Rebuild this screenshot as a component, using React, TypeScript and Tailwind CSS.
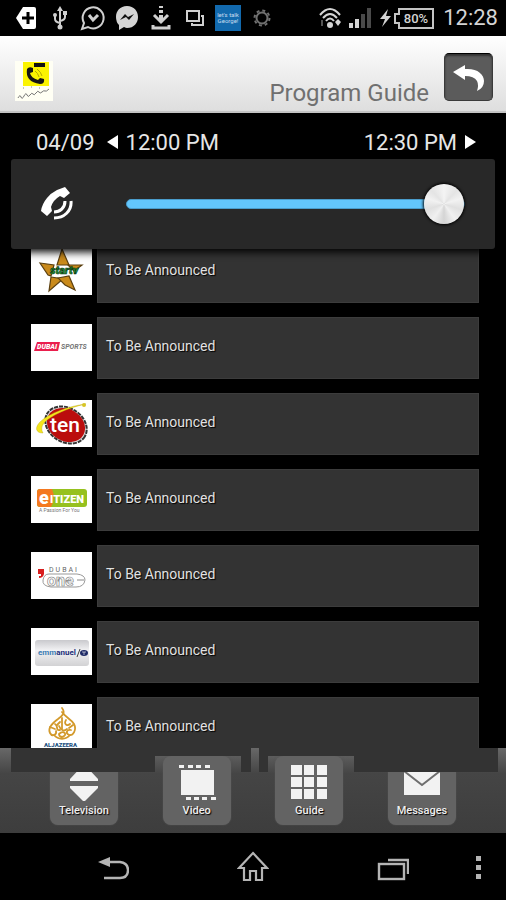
import { useState, type ReactNode } from 'react'

// ── Types ────────────────────────────────────────────────────────────────────

interface Channel {
  id: string
  name: string
  program: string
  logo: ReactNode
}

interface Tab {
  label: string
  icon: ReactNode
}

// ── Channel logos ────────────────────────────────────────────────────────────

const FONT = 'Roboto, sans-serif'

const starLogo = (
  <>
    <g fill="#c98a1b" stroke="#5c4010" strokeWidth="1.2">
      <path d="M31 1 L38 17 L26 17 Z" />
      <path d="M9 15 L23 17 L20 28 L17 27 Z" />
      <path d="M37 17 L51 17 L43 23 Z" />
      <path d="M20 29 L32 31 L18 43 Z" />
      <path d="M27 30 L38 28 L44 42 L34 37 Z" />
    </g>
    <text x="19" y="26" fontSize="11" fontStyle="italic" fontWeight="900" fill="#1f9a35" stroke="#0b3312" strokeWidth="0.6" fontFamily={FONT}>startv</text>
  </>
)

const dubaiSportsLogo = (
  <>
    <path d="M6 18 H29 L27 27 H3 Z" fill="#ea1f4d" />
    <text x="6" y="25" fontSize="7" fontStyle="italic" fontWeight="900" fill="#fff" fontFamily={FONT}>DUBAI</text>
    <text x="30" y="25" fontSize="7" fontStyle="italic" fontWeight="700" fill="#777" fontFamily={FONT}>SPORTS</text>
  </>
)

const tenLogo = (
  <>
    <ellipse cx="35" cy="25" rx="22" ry="17" transform="rotate(32 35 25)" fill="#ddd" stroke="#333" strokeWidth="2" strokeDasharray="4 1" />
    <ellipse cx="35" cy="25" rx="20" ry="16" transform="rotate(30 35 25)" fill="#bb0d0d" />
    <path d="M55 4 C36 8 19 16 13 23 Q9 28 12 33 C4 33 4 27 9 22 C18 13 38 6 55 4 Z" fill="#f4e51c" stroke="#b9a512" strokeWidth="0.4" />
    <circle cx="53" cy="5" r="2" fill="#d7c526" />
    <text x="19" y="32" fontSize="21" fontWeight="500" fill="#fff" fontFamily={FONT}>ten</text>
  </>
)

const citizenLogo = (
  <>
    <rect x="6" y="13" width="50" height="18" rx="3" fill="#96c11f" />
    <path d="M9 13 H21 Q25 22 20 31 H9 Q6 31 6 28 V16 Q6 13 9 13 Z" fill="#f47920" />
    <text x="8" y="28" fontSize="18" fontWeight="900" fill="#fff" fontFamily={FONT}>e</text>
    <text x="19" y="27" fontSize="11" fontWeight="900" fill="#fff" fontFamily={FONT}>ITIZEN</text>
    <text x="8" y="36" fontSize="5" fill="#777" fontFamily={FONT}>A Passion For You</text>
  </>
)

const dubaiOneLogo = (
  <>
    <path d="M7 17 H13 V22 Q12 26 8 26 V24 H10 V22 H7 Z" fill="#d81e1e" />
    <text x="18" y="20" fontSize="7" letterSpacing="2" fill="#666" fontFamily={FONT}>DUBAI</text>
    <path d="M18 22 H46 Q54 23 54 28 Q53 35 45 35 H20 Q11 34 12 28 Q13 22 18 22 Z" fill="none" stroke="#999" />
    <text x="16" y="34" fontSize="16" fontWeight="700" fill="#fff" stroke="#888" strokeWidth="0.7" fontFamily={FONT}>one</text>
    <path d="M46 28 H53" stroke="#888" />
  </>
)

const emmanuelLogo = (
  <>
    <defs>
      <linearGradient id="emm" x1="0" y1="0" x2="0" y2="1">
        <stop offset="0" stopColor="#c9c9cd" />
        <stop offset="0.4" stopColor="#f2f2f4" />
        <stop offset="1" stopColor="#d2d2d4" />
      </linearGradient>
    </defs>
    <rect x="4" y="12" width="54" height="26" rx="3" fill="url(#emm)" />
    <text x="7" y="27" fontSize="8" fontWeight="700" fill="#3f7fb5" fontFamily={FONT}>
      emm<tspan fill="#23307a">anuel</tspan>
    </text>
    <path d="M46 29 L49 21" stroke="#444" />
    <ellipse cx="53" cy="25" rx="4" ry="3" fill="#1e2a66" />
    <path d="M51 24 H55 M53 24 V27" stroke="#fff" strokeWidth="0.6" />
  </>
)

const jazeeraLogo = (
  <>
    <g fill="none" stroke="#d39a2c" strokeWidth="1.8" strokeLinecap="round">
      <path d="M31 4 C35 9 31 12 27 15 C20 20 17 25 19 29 C21 33 26 31 25 27" />
      <path d="M31 8 C34 13 40 15 43 20 C46 26 42 32 38 31 C34 29 36 25 40 26" />
      <path d="M24 20 C28 22 24 27 29 26 M31 14 V25 M35 16 C32 21 37 22 39 20" />
      <path d="M23 31 C27 36 35 36 39 31 M28 30 C31 27 35 28 34 31 C32 34 28 33 28 30" />
      <path d="M19 23 L24 25 M29 18 L26 21 M42 21 L38 24" />
      <path d="M28 22 Q31 29 36 25" />
    </g>
    <text x="13" y="43" fontSize="6" fontWeight="900" fill="#24527f" fontFamily={FONT}>ALJAZEERA</text>
  </>
)

const channels: Channel[] = [
  { id: 'star', name: 'Star TV', program: 'To Be Announced', logo: starLogo },
  { id: 'dubai-sports', name: 'Dubai Sports', program: 'To Be Announced', logo: dubaiSportsLogo },
  { id: 'ten', name: 'Ten', program: 'To Be Announced', logo: tenLogo },
  { id: 'citizen', name: 'Citizen', program: 'To Be Announced', logo: citizenLogo },
  { id: 'dubai-one', name: 'Dubai One', program: 'To Be Announced', logo: dubaiOneLogo },
  { id: 'emmanuel', name: 'Emmanuel TV', program: 'To Be Announced', logo: emmanuelLogo },
  { id: 'jazeera', name: 'Al Jazeera', program: 'To Be Announced', logo: jazeeraLogo },
]

// ── Tabs ─────────────────────────────────────────────────────────────────────

const tabs: Tab[] = [
  {
    label: 'Television',
    icon: (
      <>
        <path d="M20 0 L34 15 V17 H6 V15 Z" />
        <path d="M6 22 H34 V24 L21 37 H19 L6 24 Z" />
      </>
    ),
  },
  {
    label: 'Video',
    icon: (
      <>
        <rect x="4" y="6" width="33" height="25" />
        <path d="M2 1h5v3h-5z M11 1h5v3h-5z M19 1h5v3h-5z M28 1h5v3h-5z" />
        <path d="M9 33h5v3h-5z M17 33h5v3h-5z M25 33h5v3h-5z M34 33h5v3h-5z" />
      </>
    ),
  },
  {
    label: 'Guide',
    icon: (
      <path d="M2 1h11v10h-11z M15 1h10v10h-10z M28 1h10v10h-10z M2 13h11v10h-11z M15 13h10v10h-10z M28 13h10v10h-10z M2 25h11v10h-11z M15 25h10v10h-10z M28 25h10v10h-10z" />
    ),
  },
  {
    label: 'Messages',
    icon: (
      <>
        <rect x="2" y="6" width="36" height="25" />
        <path d="M2 7 L20 21 L38 7" fill="none" stroke="#6e6e6e" strokeWidth="2" />
      </>
    ),
  },
]

// ── Component ────────────────────────────────────────────────────────────────

export default function App() {
  const [volume, setVolume] = useState(100)

  return (
    <div className="flex h-screen flex-col overflow-hidden bg-black font-['Roboto',sans-serif]">
      <StatusBar />

      <header className="flex h-[77px] shrink-0 items-end border-b-2 border-[#c4c4c4] bg-linear-to-b from-white to-[#dedede] pr-[13px] pb-[10px] pl-[15px]">
        <AppLogo />
        <h1 className="mr-[15px] ml-auto text-[24px] leading-[16px] text-[#707070]">Program Guide</h1>
        <button
          type="button"
          aria-label="Back"
          className="flex h-12 w-[49px] items-center justify-center rounded-[5px] border border-[#3a3a3a] border-t-black bg-[#5b5b5b] shadow-[inset_0_2px_2px_#333]"
        >
          <svg width="33" height="28" viewBox="0 0 33 28" fill="#fff">
            <path d="M1 9 L13 2 V6 C25 5 32 11 32 18 Q32 25 25 28 Q27 22 25 18 Q22 13 13 13 V17 Z" />
          </svg>
        </button>
      </header>

      <main className="relative min-h-0 flex-1 overflow-hidden">
        <div className="flex h-[58px] items-center pr-[30px] pl-9 text-[22px] text-[#e6e6e6]">
          <span>04/09</span>
          <button type="button" className="ml-3 flex items-center gap-2">
            <svg width="11" height="14" viewBox="0 0 11 14" fill="#fff"><path d="M11 0 V14 L0 7 Z" /></svg>
            12:00 PM
          </button>
          <button type="button" className="ml-auto flex items-center gap-2">
            12:30 PM
            <svg width="11" height="14" viewBox="0 0 11 14" fill="#fff"><path d="M0 0 V14 L11 7 Z" /></svg>
          </button>
        </div>

        <ul className="flex flex-col gap-[14px] pt-[70px] pr-[27px] pl-[31px]">
          {channels.map(c => (
            <li key={c.id} className="flex h-[62px] shrink-0 items-start gap-[5px]">
              <svg role="img" aria-label={c.name} viewBox="0 0 61 47" className="mt-[7px] h-[47px] w-[61px] shrink-0 bg-white">
                {c.logo}
              </svg>
              <div className="h-full flex-1 border border-[#3c3c3c] bg-[#333] px-2 pt-[18px] text-[14px] leading-5 text-[#e2e2e2] [text-shadow:1px_1px_1px_#000]">
                {c.program}
              </div>
            </li>
          ))}
        </ul>

        {/* Call volume, floats over the guide */}
        <div className="absolute inset-x-[11px] top-[46px] flex h-[90px] items-center rounded-[3px] bg-[#282828] pr-[30px] pl-[29px] shadow-[0_3px_8px_#000]">
          <svg width="33" height="34" viewBox="0 0 33 34" fill="none" stroke="#fff" className="shrink-0">
            <path d="M17 3 L25 0 L30 6 L24 11 L20 9 Q13 13 11 20 L12 24 L7 29 L1 24 Q2 17 7 11 Q11 6 17 3 Z" fill="#fff" stroke="none" />
            <path d="M31 14 C32 24 24 31 14 31" strokeWidth="3" />
            <path d="M25 14 C25 21 20 25 14 25" strokeWidth="3" />
          </svg>
          <input
            type="range"
            aria-label="Call volume"
            value={volume}
            onChange={e => setVolume(Number(e.target.value))}
            className="ml-[53px] h-10 min-w-0 flex-1 appearance-none bg-transparent [&::-webkit-slider-runnable-track]:h-[10px] [&::-webkit-slider-runnable-track]:rounded-full [&::-webkit-slider-runnable-track]:border [&::-webkit-slider-runnable-track]:border-[#4a9ccb] [&::-webkit-slider-runnable-track]:bg-[#63c6fc] [&::-webkit-slider-thumb]:-mt-4 [&::-webkit-slider-thumb]:size-10 [&::-webkit-slider-thumb]:appearance-none [&::-webkit-slider-thumb]:rounded-full [&::-webkit-slider-thumb]:bg-[conic-gradient(#f4f4f4,#e4e4e4_12%,#f2f2f2_20%,#e0e0e0_30%,#f0f0f0_40%,#d4d4d4_50%,#f0f0f0_60%,#e0e0e0_70%,#f2f2f2_80%,#e4e4e4_88%,#f4f4f4)] [&::-webkit-slider-thumb]:shadow-[0_0_3px_1px_#000]"
          />
        </div>
      </main>

      <nav className="relative flex h-[85px] shrink-0 justify-between bg-linear-to-b from-[#686868] via-[#454545] via-30% to-[#3d3d3d] px-[50px] pt-2 pb-2">
        {tabs.map(t => (
          <button
            key={t.label}
            type="button"
            className="flex w-[68px] flex-col items-center rounded-lg bg-[#636363] pt-2 text-[11px] leading-4 font-medium text-[#eee] shadow-[0_0_2px_#555] [text-shadow:1px_1px_1px_#000]"
          >
            <svg width="40" height="37" viewBox="0 0 40 37" fill="#f2f2f2" className="mb-[2px] shrink-0">{t.icon}</svg>
            {t.label}
          </button>
        ))}

        {/* Lower edge of the guide grid, overlapping the tabs */}
        <div className="pointer-events-none absolute top-0 right-2 left-[11px] flex items-start">
          <div className="h-6 flex-1 bg-[#333]" />
          <div className="h-2 w-[86px] bg-[#333]" />
          <div className="mr-2 h-6 w-[10px] bg-[#333]" />
          <div className="h-6 w-[9px] bg-[#333]" />
          <div className="h-2 w-[86px] bg-[#333]" />
          <div className="h-6 flex-1 bg-[#333]" />
        </div>
      </nav>

      <SystemBar />
    </div>
  )
}

// ── Small sub-components ─────────────────────────────────────────────────────

function StatusIcon({ children }: { children: ReactNode }) {
  return (
    <svg width="26" height="26" viewBox="0 0 26 26" fill="none" stroke="#d0d0d0" strokeWidth="2" className="shrink-0">
      {children}
    </svg>
  )
}

function StatusBar() {
  return (
    <div className="flex h-9 shrink-0 items-center bg-black pr-2 pl-[13px] text-[#d4d4d4]">
      <div className="flex w-[262px] shrink-0 items-center justify-between">
        <StatusIcon>
          <path d="M10 2 H21 Q23 2 23 4 V22 Q23 24 21 24 H10 L3 13 Z" fill="#fff" stroke="none" />
          <path d="M15 7 V19 M9 13 H21" stroke="#000" strokeWidth="3" />
        </StatusIcon>
        <StatusIcon>
          <path d="M13 4 V22 M8 11 V14 Q8 17 13 18 M18 9 V12 Q18 15 13 16" />
          <path d="M13 1 L16 6 H10 Z" fill="#d0d0d0" stroke="none" />
          <circle cx="13" cy="22" r="2.5" fill="#d0d0d0" stroke="none" />
          <rect x="16" y="6" width="4" height="4" fill="#d0d0d0" stroke="none" />
          <circle cx="8" cy="10" r="2" fill="#d0d0d0" stroke="none" />
        </StatusIcon>
        <StatusIcon>
          <path d="M2 24 L4 18 A10.5 10.5 0 1 1 8 22 Z" />
          <path d="M9 10 L13 15 L18 10" strokeWidth="3" />
        </StatusIcon>
        <StatusIcon>
          <path d="M13 1 C6 1 2 6 2 12 Q2 17 5 20 V25 L10 22 Q12 23 13 23 C20 23 24 18 24 12 C24 6 20 1 13 1 Z" fill="#d4d4d4" stroke="none" />
          <path d="M6 15 L11 9 L14 12 L20 9 L15 15 L12 12 Z" fill="#111" stroke="none" />
        </StatusIcon>
        <StatusIcon>
          <path d="M13 1 V3 M13 5 V8 M13 10 V17" strokeWidth="4" />
          <path d="M6 10 L13 17 L20 10" strokeWidth="3" />
          <path d="M5 20 V23 H21 V20" strokeWidth="3" />
        </StatusIcon>
        <StatusIcon>
          <rect x="5" y="6" width="12" height="10" />
          <path d="M19 11 H21 V20 H10 V18" />
        </StatusIcon>
        <StatusIcon>
          <rect width="26" height="26" fill="#1269ad" stroke="none" />
          <g fill="#c5dcef" stroke="none" fontFamily={FONT} fontSize="6" textAnchor="middle">
            <text x="13" y="12">let's talk</text>
            <text x="13" y="18">George!</text>
          </g>
        </StatusIcon>
        <StatusIcon>
          <circle cx="13" cy="13" r="5.5" stroke="#707070" />
          <circle cx="13" cy="13" r="7.5" stroke="#707070" strokeDasharray="3 2.9" />
        </StatusIcon>
      </div>

      <div className="ml-auto flex shrink-0 items-center">
        <svg width="22" height="22" viewBox="0 0 22 22" fill="none" stroke="#d4d4d4" strokeWidth="2">
          <path d="M1 8 Q11 -4 21 8 M4 11 Q11 3 18 11 M7 14 Q11 9 15 14" />
          <circle cx="11" cy="18" r="3" fill="#d4d4d4" stroke="none" />
          <path d="M3 13 V19" stroke="#555" />
          <path d="M16 15 L19 12 L22 15 L19 19 Z" fill="#d4d4d4" stroke="none" />
        </svg>
        <svg width="22" height="20" viewBox="0 0 22 20" className="ml-2">
          <path d="M0 15h4v5h-4z M6 11h4v9h-4z" fill="#d4d4d4" />
          <path d="M12 6h4v14h-4z M18 0h4v20h-4z" fill="#4a4a4a" />
        </svg>
        <svg width="11" height="18" viewBox="0 0 11 18" fill="#d4d4d4" className="ml-[9px]">
          <path d="M8 0 L0 10 H5 L2 18 L11 7 H6 Z" />
        </svg>
        <svg width="40" height="21" viewBox="0 0 40 21" fill="none" stroke="#c4c4c4" strokeWidth="2" className="ml-[3px]">
          <path d="M5 1 H39 V20 H5 V15 H1 V6 H5 Z" />
          <text x="22" y="15" fontSize="13" fontWeight="500" textAnchor="middle" fill="#d4d4d4" stroke="none" fontFamily={FONT}>80%</text>
        </svg>
        <time className="ml-[9px] text-[22px] leading-9">12:28</time>
      </div>
    </div>
  )
}

function AppLogo() {
  return (
    <svg width="38" height="40" viewBox="0 0 38 40" aria-label="Phone app" role="img">
      <rect width="38" height="40" fill="#fffff4" />
      <rect x="8" y="1" width="26" height="24" fill="#fbf400" />
      <path d="M19 2 H30 V6 H19 Z" fill="#111" />
      <path d="M12 8 Q14 5 18 7 L18 11 L15 12 Q16 17 23 19 L25 17 L29 18 Q30 23 25 23 Q10 21 12 8 Z" fill="#151515" />
      <path d="M20 10 Q23 12 24 16 M22 8 Q26 11 27 15" fill="none" stroke="#b3a900" />
      <path d="M3 37 Q5 33 6 36 T9 35 T12 34 T15 34 T18 33 T21 32 T24 31 T27 31 T30 30 T34 28" fill="none" stroke="#777" />
      <path d="M8 27h1 M16 26h1 M24 27h1" stroke="#888" />
    </svg>
  )
}

function SystemBar() {
  return (
    <div className="grid h-[67px] shrink-0 grid-cols-[1fr_auto_1fr] items-center bg-black">
      <div className="col-start-2 flex gap-[108px]">
        <button type="button" aria-label="System back">
          <svg width="32" height="32" viewBox="0 0 32 32" fill="none" stroke="#b4b4b4" strokeWidth="2">
            <path d="M10 11 H23 Q31 12 31 19 Q31 27 23 27 H7" strokeWidth="2.4" />
            <path d="M1 11 L13 6 V16 Z" fill="#b4b4b4" stroke="none" />
          </svg>
        </button>
        <button type="button" aria-label="Home">
          <svg width="32" height="32" viewBox="0 0 32 32" fill="none" stroke="#b4b4b4" strokeWidth="2.2">
            <path d="M16 2 L30 17 H25 V29 H19 V20 H13 V29 H7 V17 H2 Z" />
          </svg>
        </button>
        <button type="button" aria-label="Recent apps">
          <svg width="32" height="32" viewBox="0 0 32 32" fill="none" stroke="#b4b4b4" strokeWidth="2.4">
            <rect x="2" y="13" width="25" height="15" />
            <path d="M11 9 H31 V23" />
          </svg>
        </button>
      </div>
      <button type="button" aria-label="More options" className="mr-6 justify-self-end">
        <svg width="6" height="24" viewBox="0 0 6 24" fill="#b4b4b4">
          <path d="M0 1h5v5h-5z M0 10h5v5h-5z M0 19h5v5h-5z" />
        </svg>
      </button>
    </div>
  )
}
